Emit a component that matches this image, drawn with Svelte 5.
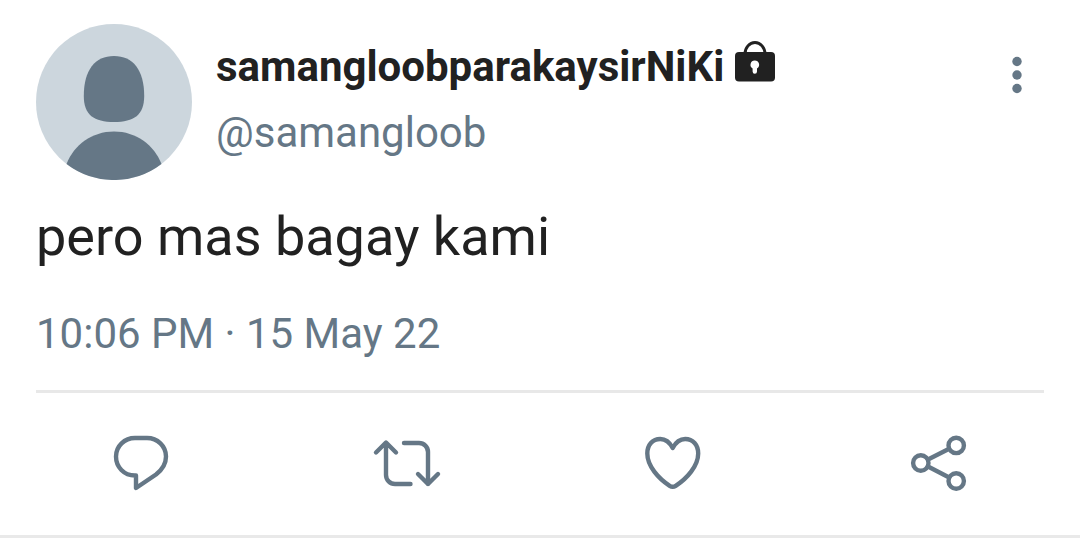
<script>
    const tweet = {
        name: "samangloobparakaysirNiKi",
        handle: "@samangloob",
        text: "pero mas bagay kami",
        time: "10:06 PM",
        date: "15 May 22"
    };

    let liked = $state(false);
</script>

<article class="tweet">
    <div class="content">
        <header class="header">
            <svg class="avatar" viewBox="0 0 156 156" aria-hidden="true">
                <circle cx="78" cy="78" r="78" fill="#ccd6dd" />
                <path d="M78 32C97 32 108.200 46 108.200 72C108.200 91 98 98 78 98S47.800 91 47.800 72C47.800 46 59 32 78 32z" fill="#657786" />
                <path d="M30.500 139.900C38 121 56 107.500 78 107.500s40 13.500 47.500 32.400A78 78 0 0 1 30.500 139.900z" fill="#657786" />
            </svg>

            <div class="names">
                <div class="nameRow">
                    <span class="name">{tweet.name}</span>
                    <svg class="lock" viewBox="0 0 40 41" role="img" aria-label="Protected account">
                        <path d="M10 13a10 11.500 0 0 1 20 0" fill="none" stroke="#212121" stroke-width="3" />
                        <rect x="0" y="11" width="40" height="29.500" rx="4" fill="#212121" />
                        <path d="M19.700 19.500a4.300 4.300 0 0 1 2.300 8v3a2.200 2.200 0 0 1-4.400 0v-3a4.300 4.300 0 0 1 2.100-8z" fill="#fff" />
                    </svg>
                </div>
                <a class="handle" href="/samangloob">{tweet.handle}</a>
            </div>

            <button class="more" aria-label="More">
                <svg viewBox="0 0 54 54">
                    <circle cx="27" cy="13.500" r="4.700" />
                    <circle cx="27" cy="27" r="4.700" />
                    <circle cx="27" cy="40.500" r="4.700" />
                </svg>
            </button>
        </header>

        <p class="text">{tweet.text}</p>
        <p class="date">{tweet.time} · {tweet.date}</p>
    </div>

    <footer class="actions">
        <button aria-label="Reply">
            <svg viewBox="0 0 72 72">
                <path d="M31 48.500H30C19 48.500 11 40 11 29.500S19.500 11 30 11H42C52.500 11 61 19 61 29.500C61 36.500 57.500 42.500 51 47.500L31 61z" />
            </svg>
        </button>
        <button aria-label="Retweet">
            <svg viewBox="0 0 72 72">
                <path d="M5 25.500L15 15.500l10 10M15 16v32a9 9 0 0 0 9 9h15.500" />
                <path d="M33 16h15a9 9 0 0 1 9 9v32M47 47l10 10L67 47" />
            </svg>
        </button>
        <button aria-label="Like" aria-pressed={liked} onclick={() => (liked = !liked)}>
            <svg viewBox="0 0 72 72">
                <path d="M35.700 21C32.500 15 28.500 12 23.300 12C15.500 12 10.300 18 10.300 26.500C10.300 39 21.500 51.500 32.700 58.800Q35.700 60.800 38.700 58.800C49.900 51.500 61.200 39 61.200 26.500C61.200 18 55.900 12 48.200 12C43 12 38.900 15 35.700 21z" />
            </svg>
        </button>
        <button aria-label="Share">
            <svg viewBox="0 0 72 72">
                <circle cx="17.800" cy="36" r="7.700" />
                <circle cx="53.200" cy="18.400" r="7.700" />
                <circle cx="53.200" cy="54" r="7.700" />
                <path d="M25 32.500L46.200 21.800M25 39.500L46.200 50.500" />
            </svg>
        </button>
    </footer>
</article>

<style>
    :global(body) {
        background: #fff;
    }

    .tweet {
        font-family: Roboto, "Liberation Sans", sans-serif;
        color: #212121;
        border-bottom: 3px solid #e9e9e9;
    }

    .content {
        margin: 0 36px;
        padding: 24px 0 31px;
        border-bottom: 3px solid #e8e8e8;
    }

    .header {
        display: flex;
        align-items: flex-start;
        gap: 24px;
    }

    .avatar {
        width: 156px;
        height: 156px;
        flex-shrink: 0;
    }

    .names {
        flex: 1;
        min-width: 0;
        padding-top: 10px;
        font-size: 42px;
        line-height: 66px;
    }

    .nameRow {
        display: flex;
        align-items: center;
        gap: 11px;
    }

    .name {
        font-weight: bold;
    }

    .lock {
        width: 40px;
        height: 41px;
        margin-bottom: 12px;
    }

    .handle {
        display: block;
        color: #657786;
        text-decoration: none;
    }

    .text {
        margin: 25px 0 40px;
        font-size: 54px;
        line-height: 64px;
    }

    .date {
        margin: 0;
        color: #657786;
        font-size: 42px;
        line-height: 50px;
    }

    button {
        padding: 0;
        border: none;
        background: none;
        cursor: pointer;
    }

    button svg {
        display: block;
    }

    .more {
        width: 54px;
        height: 54px;
        margin-top: 24px;
        fill: #657786;
    }

    .actions {
        display: grid;
        grid-template-columns: repeat(4, 1fr);
        justify-items: center;
        padding: 34px 8px 36px;
    }

    .actions button {
        width: 72px;
        height: 72px;
    }

    .actions svg {
        fill: none;
        stroke: #657786;
        stroke-width: 4.4;
        stroke-linecap: round;
        stroke-linejoin: round;
    }
</style>
